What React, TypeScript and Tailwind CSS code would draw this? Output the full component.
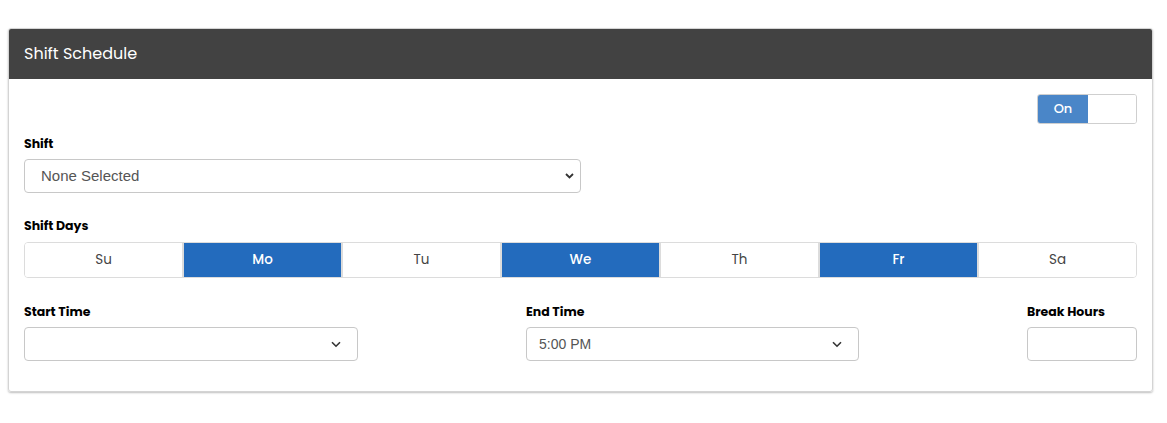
import React from "react";

const Chevron = ({ className = "" }: { className?: string }) => (
  <svg width="10" height="7" viewBox="0 0 10 7" className={className}>
    <path d="M1 1.2 L5 5.2 L9 1.2" fill="none" stroke="#333" strokeWidth="1.6" />
  </svg>
);

const days = [
  { d: "Su", on: false },
  { d: "Mo", on: true },
  { d: "Tu", on: false },
  { d: "We", on: true },
  { d: "Th", on: false },
  { d: "Fr", on: true },
  { d: "Sa", on: false },
];

export default function App() {
  return (
    <div className="bg-white w-[1167px] h-[423px] pt-[28px] pl-[8px] font-['Poppins','Open_Sans',sans-serif]">
      <div className="w-[1145px] border border-[#d4d4d4] rounded-[3px] shadow-[0_1px_2px_rgba(0,0,0,0.25)] overflow-hidden">
        <div className="h-[50px] bg-[#424242] flex items-center px-[15px] text-white text-[16px]">
          Shift Schedule
        </div>
        <div className="px-[15px] pt-[15px] pb-[30px]">
          <div className="flex justify-end">
            <div className="w-[100px] h-[30px] border border-[#cfcfcf] rounded-[3px] flex overflow-hidden">
              <div className="w-[50px] bg-[#4a86c8] text-white text-[13px] font-medium flex items-center justify-center">
                On
              </div>
              <div className="flex-1 bg-white" />
            </div>
          </div>
          <div className="text-[12.5px] font-bold text-black mt-[11px] leading-[18px]">Shift</div>
          <div className="mt-[6px] w-[557px] h-[34px] border border-[#c8c8c8] rounded-[4px] flex items-center justify-between pl-[16px] pr-[6px] font-['Liberation_Sans',Arial,sans-serif] text-[15px] text-[#555]">
            <span>None Selected</span>
            <svg width="9" height="6" viewBox="0 0 9 6">
              <path d="M1 1 L4.5 4.5 L8 1" fill="none" stroke="#333" strokeWidth="1.8" />
            </svg>
          </div>
          <div className="text-[12.5px] font-bold text-black mt-[24px] leading-[18px]">Shift Days</div>
          <div className="mt-[7px] h-[36px] flex border border-[#dcdcdc] rounded-[4px] overflow-hidden">
            {days.map((x, i) => (
              <div
                key={x.d}
                className={`flex-1 flex items-center justify-center text-[13.5px] ${i > 0 ? "border-l-2 border-[#dcdcdc]" : ""} ${
                  x.on ? "bg-[#236bbd] text-white font-medium" : "bg-white text-[#444]"
                }`}
              >
                {x.d}
              </div>
            ))}
          </div>
          <div className="mt-[25px] flex justify-between">
            <div className="w-[334px]">
              <div className="text-[12.5px] font-bold text-black leading-[18px]">Start Time</div>
              <div className="mt-[6px] h-[34px] border border-[#c8c8c8] rounded-[4px] flex items-center justify-end pr-[16px]">
                <Chevron />
              </div>
            </div>
            <div className="w-[333px] ml-[168px]">
              <div className="text-[12.5px] font-bold text-black leading-[18px]">End Time</div>
              <div className="mt-[6px] h-[34px] border border-[#c8c8c8] rounded-[4px] flex items-center justify-between pl-[12px] pr-[16px] font-['Liberation_Sans',Arial,sans-serif] text-[14px] text-[#555]">
                <span>5:00 PM</span>
                <Chevron />
              </div>
            </div>
            <div className="flex-1" />
            <div className="w-[110px]">
              <div className="text-[12.5px] font-bold text-black leading-[18px]">Break Hours</div>
              <div className="mt-[6px] h-[34px] border border-[#c8c8c8] rounded-[4px]" />
            </div>
          </div>
        </div>
      </div>
    </div>
  );
}
